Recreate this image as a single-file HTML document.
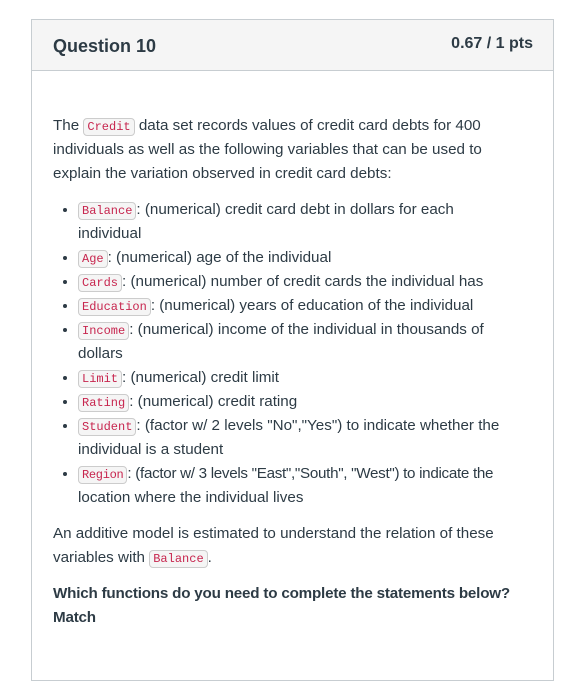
<!DOCTYPE html>
<html><head><style>
body{margin:0;background:#fff;width:574px;height:652px;overflow:hidden;font-family:"Liberation Sans",sans-serif;color:#2d3b45}
.box{position:absolute;left:31px;top:19px;width:521px;height:660px;border:1px solid #c7cdd1;}
.hd{height:50px;background:#f5f5f5;border-bottom:1px solid #c7cdd1;position:relative}
.hd .t{position:absolute;left:21px;top:16px;font-size:18px;font-weight:bold}
.hd .p{position:absolute;right:20px;top:15px;font-size:16px;font-weight:bold}
.bd{position:absolute;left:21px;top:94px;width:452px;font-size:15.2px;line-height:24px}
code{font-family:"Liberation Mono",monospace;font-size:12px;line-height:14px;display:inline-block;color:#c7254e;background:#f5f5f5;border:1px solid #ccc;border-radius:4px;padding:1px 3px;vertical-align:0}
p{margin:0}
ul{margin:12px 0 12px;padding-left:25px}
li{margin:0}
b{display:block;margin-top:12px;width:480px;letter-spacing:-0.2px;white-space:nowrap}
</style></head><body>
<div class="box">
<div class="hd"><span class="t">Question 10</span><span class="p">0.67 / 1 pts</span></div>
<div class="bd">
<p>The <code>Credit</code> data set records values of credit card debts for 400 individuals as well as the following variables that can be used to explain the variation observed in credit card debts:</p>
<ul>
<li><code>Balance</code>: (numerical) credit card debt in dollars for each individual</li>
<li><code>Age</code>: (numerical) age of the individual</li>
<li><code>Cards</code>: (numerical) number of credit cards the individual has</li>
<li><code>Education</code>: (numerical) years of education of the individual</li>
<li><code>Income</code>: (numerical) income of the individual in thousands of dollars</li>
<li><code>Limit</code>: (numerical) credit limit</li>
<li><code>Rating</code>: (numerical) credit rating</li>
<li><code>Student</code>: (factor w/ 2 levels "No","Yes") to indicate whether the individual is a student</li>
<li><span style="white-space:nowrap;letter-spacing:-0.3px"><code>Region</code>: (factor w/ 3 levels "East","South", "West") to indicate the</span><br>location where the individual lives</li>
</ul>
<p>An additive model is estimated to understand the relation of these variables with <code>Balance</code>.</p>
<b>Which functions do you need to complete the statements below?<br>Match</b>
</div>
</div>
</body></html>
